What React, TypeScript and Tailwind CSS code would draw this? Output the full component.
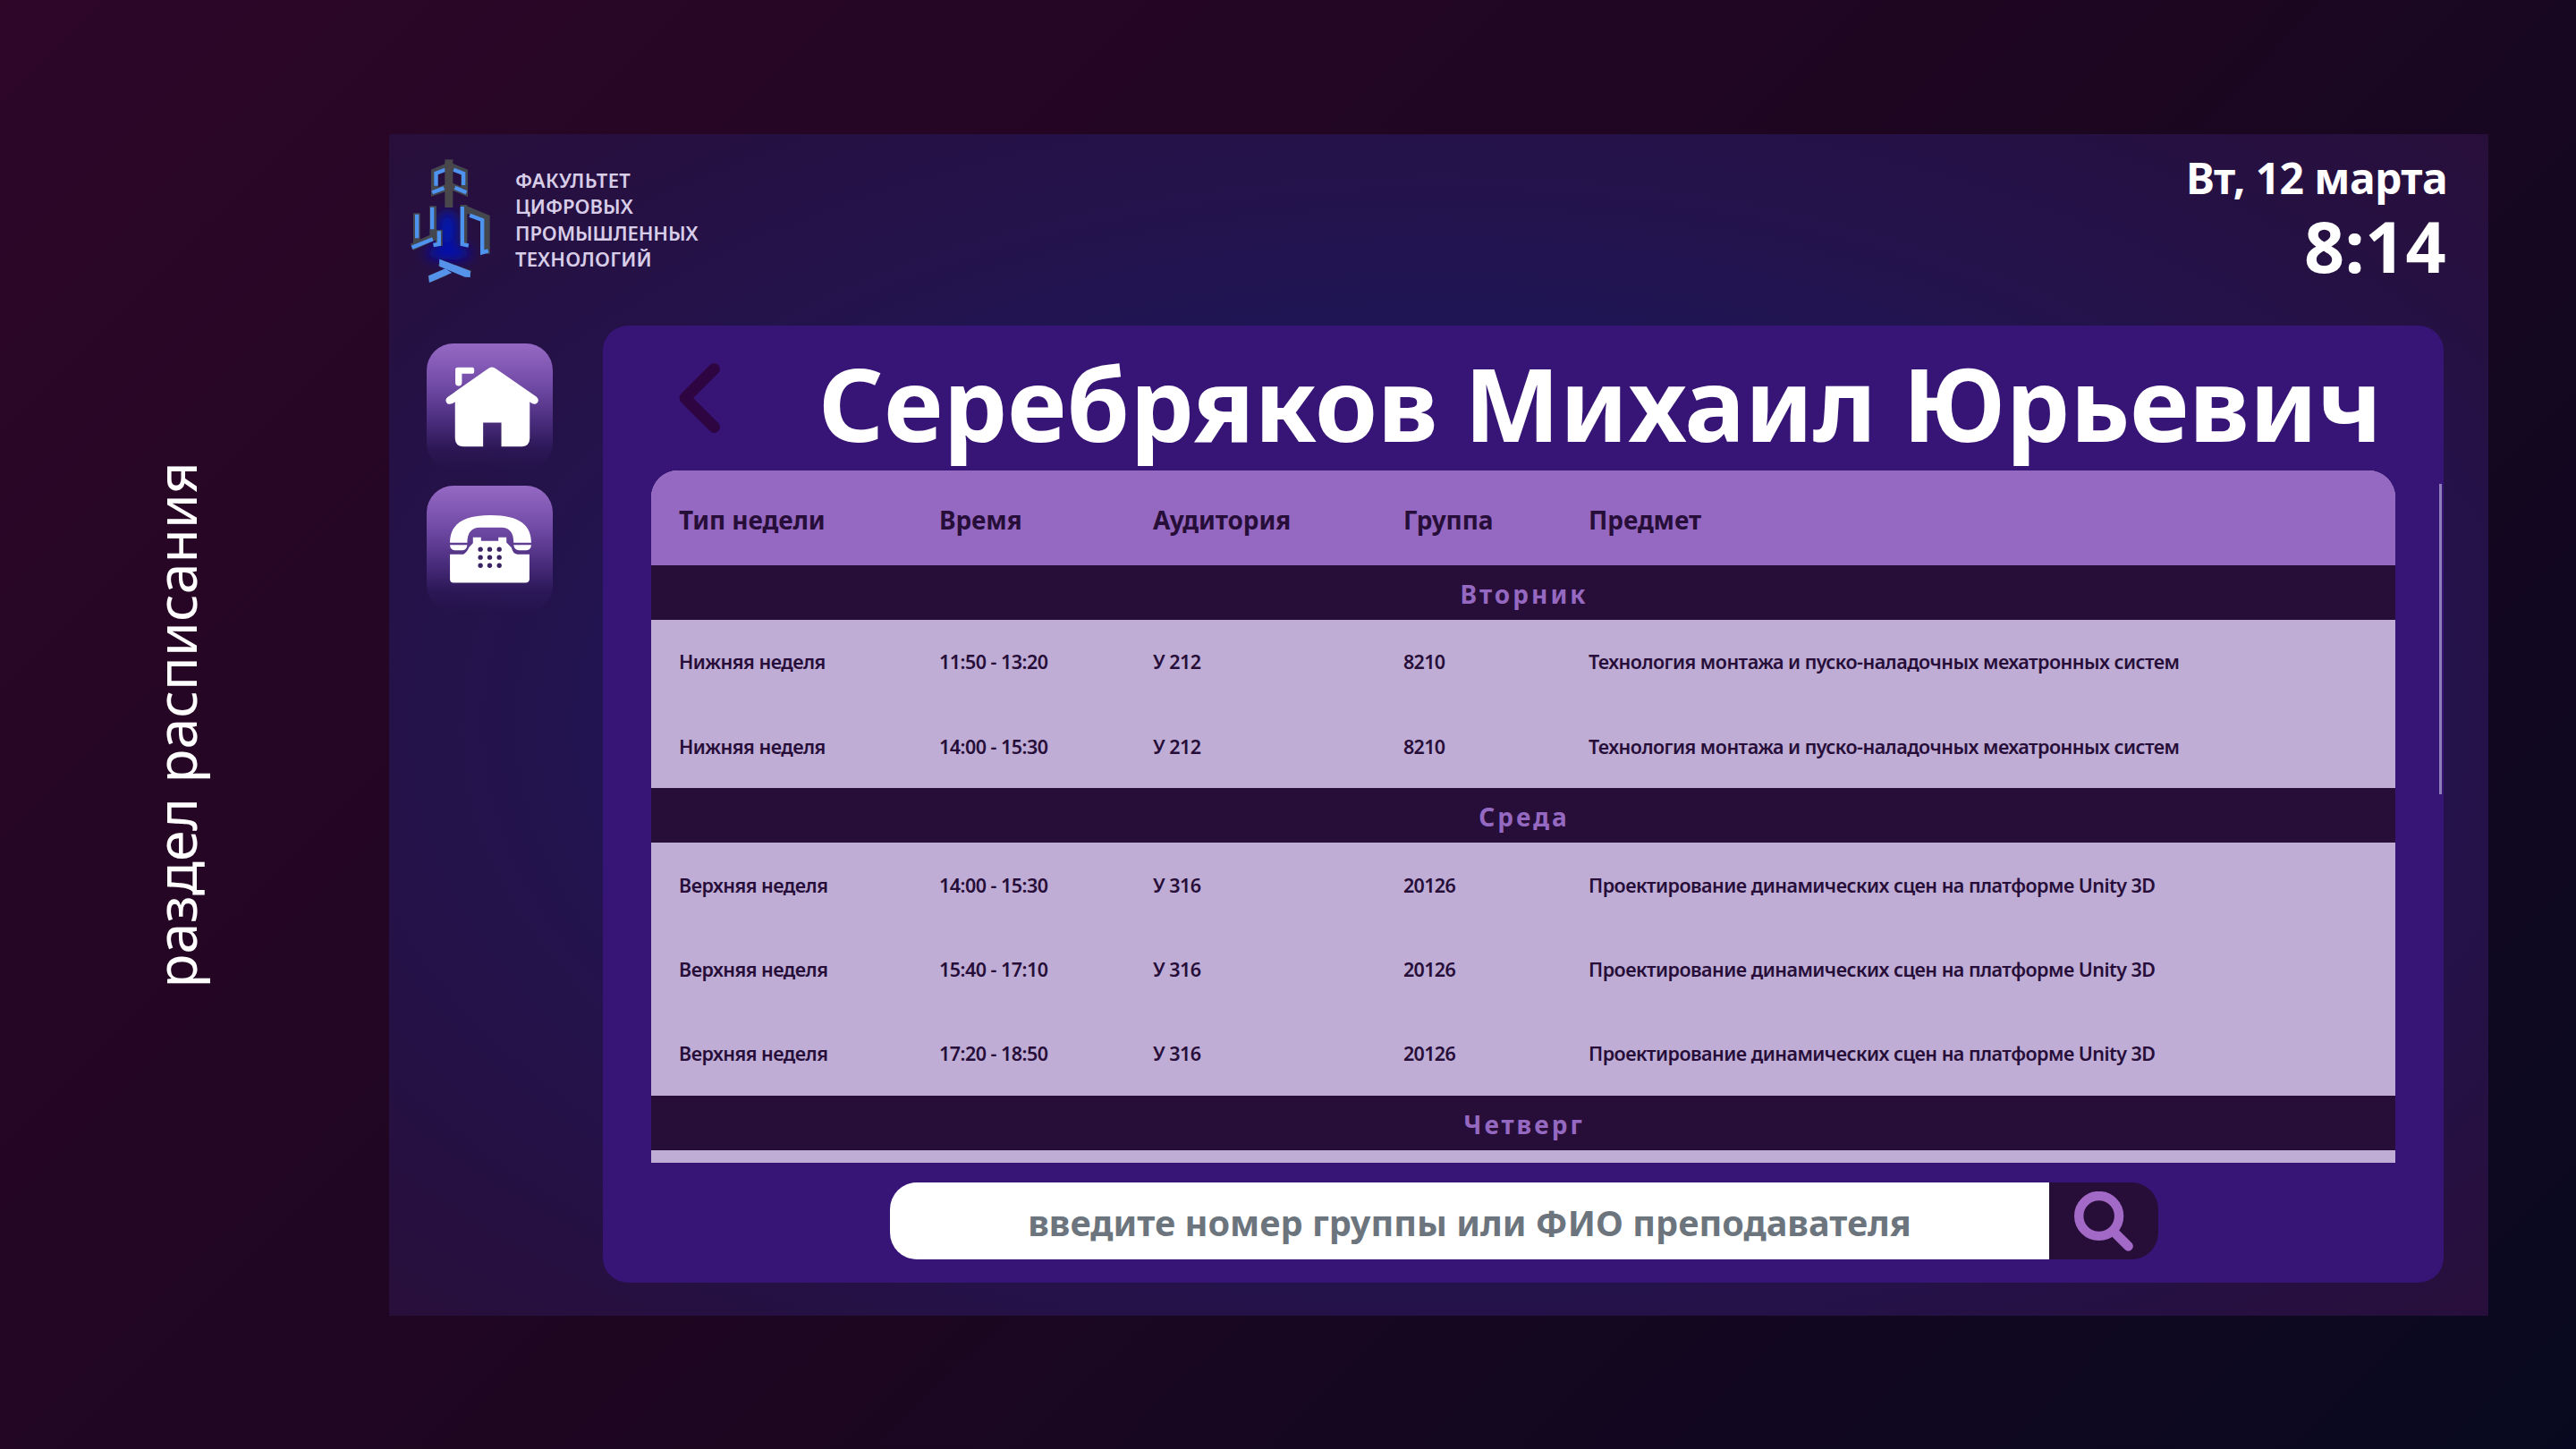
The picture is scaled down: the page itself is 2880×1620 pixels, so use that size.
import React from "react";

type Lesson = { week: string; time: string; room: string; group: string; subject: string };
type Day = { name: string; lessons: Lesson[] };

const mechatronics = "Технология монтажа и пуско-наладочных мехатронных систем";
const unity = "Проектирование динамических сцен на платформе Unity 3D";

const days: Day[] = [
  {
    name: "Вторник",
    lessons: [
      { week: "Нижняя неделя", time: "11:50 - 13:20", room: "У 212", group: "8210", subject: mechatronics },
      { week: "Нижняя неделя", time: "14:00 - 15:30", room: "У 212", group: "8210", subject: mechatronics },
    ],
  },
  {
    name: "Среда",
    lessons: [
      { week: "Верхняя неделя", time: "14:00 - 15:30", room: "У 316", group: "20126", subject: unity },
      { week: "Верхняя неделя", time: "15:40 - 17:10", room: "У 316", group: "20126", subject: unity },
      { week: "Верхняя неделя", time: "17:20 - 18:50", room: "У 316", group: "20126", subject: unity },
    ],
  },
  { name: "Четверг", lessons: [] },
];

const columns = "grid grid-cols-[291px_239px_280px_207px_1fr] items-center pl-[31px]";

function Logo() {
  return (
    <svg viewBox="85 78 272 420" className="h-[140px] w-[91px] shrink-0" fill="none">
      <defs>
        <filter id="glow" x="-60%" y="-60%" width="220%" height="220%">
          <feGaussianBlur stdDeviation="20" />
        </filter>
        <filter id="soft" x="-10%" y="-10%" width="120%" height="120%">
          <feGaussianBlur stdDeviation="2" />
        </filter>
      </defs>
      <g filter="url(#glow)">
        <ellipse cx="212" cy="315" rx="34" ry="62" fill="#0616b4" />
        <ellipse cx="215" cy="395" rx="76" ry="24" fill="#060eb8" />
      </g>
      <g filter="url(#soft)">
        <g stroke="#45474f" strokeWidth="23">
          <path d="M210 106 L168 124 V190 L210 176" />
          <path d="M224 106 L268 124 V190 L224 172" />
          <path d="M108 262 V372 M92 376 L178 336 M163 238 V345 M183 318 V372" />
          <path d="M266 234 V368 M266 246 L342 278 V398" />
          <path d="M184 428 L288 466 M150 484 L206 460" />
        </g>
        <g stroke="#4f93f0" strokeWidth="13">
          <path d="M204 116 L173 128 V170 M160 193 L200 178" />
          <path d="M232 116 L265 129 V168 M236 176 L275 193" />
          <path d="M109 266 V346 M92 377 L162 349 M160 242 V316 M183 322 V366 L164 369" />
          <path d="M261 240 V366 L282 371 M286 269 L328 285 V394 L348 388" />
        </g>
        <path d="M184 416 L288 456 V477 L270 476 L184 440 Z" fill="#5593ea" />
        <path d="M148 472 L204 448 L226 462 L150 495 Z" fill="#5593ea" />
        <path d="M216 82 V243" stroke="#48474c" strokeWidth="27" />
      </g>
    </svg>
  );
}

function HouseIcon() {
  return (
    <svg viewBox="82 73 422 422" className="size-full" fill="#fff">
      <path d="M184 153 H236 Q241 154 241 159 V169 Q241 174 236 174 H200 V204 a11 11 0 0 1 -22 0 V159 Q178 154 184 153 Z" />
      <path d="M286 158 Q300 147 315 158 L450 252 Q461 263 451 273 Q441 280 427 268 V390 Q426 416 402 418 H332 V338 H271 V418 H203 Q178 416 177 390 V268 Q163 280 151 274 Q141 263 151 253 Z" />
    </svg>
  );
}

function PhoneIcon() {
  return (
    <svg viewBox="82 550 422 422" className="size-full" fill="#fff">
      <path d="M160 741 C160 685 196 649 296 649 C396 649 432 685 432 741 H373 C373 710 362 690 332 690 H260 C230 690 218 710 218 741 Z" />
      <path d="M160 748 H218 Q216 766 200 766 H176 Q161 764 160 748 Z" />
      <path d="M373 748 H432 Q431 764 416 766 H391 Q375 764 373 748 Z" />
      <path d="M237 723 H264 V735 H322 V723 H349 V740 L366 757 Q370 777 386 780 H426 V863 Q425 875 413 875 H172 Q160 875 160 863 V780 H205 Q218 772 224 756 L237 742 Z" />
      <g fill="#3a2363">
        {[763, 790, 817].map((y) => [262, 293, 325].map((x) => <circle key={`${x}-${y}`} cx={x} cy={y} r="8" />))}
      </g>
    </svg>
  );
}

function NavButton({ label, children }: { label: string; children: React.ReactNode }) {
  return (
    <button
      aria-label={label}
      className="block size-[141px] rounded-[30px] bg-[linear-gradient(180deg,#9569c3_0%,#754eaa_30%,#492c7c_62%,rgba(52,28,98,0.5)_84%,rgba(38,17,74,0)_100%)]"
    >
      {children}
    </button>
  );
}

function Schedule() {
  return (
    <div className="mx-[54px] h-[774px] overflow-hidden rounded-t-[30px] bg-[#bfadd6] text-[#270e39]">
      <div className={`${columns} h-[106px] bg-[#9569c1] pt-[3px] text-[28px] font-bold tracking-[-0.1px]`}>
        <span>Тип недели</span>
        <span>Время</span>
        <span>Аудитория</span>
        <span>Группа</span>
        <span>Предмет</span>
      </div>
      {days.map((day) => (
        <section key={day.name}>
          <h2 className="flex h-[61px] items-center justify-center bg-[#270e39] pt-[3px] pl-[2px] text-[28px] font-bold tracking-[3px] text-[#9569c1]">
            {day.name}
          </h2>
          {day.lessons.map((l) => (
            <div key={l.time} className={`${columns} h-[94.2px] pt-px text-[21.5px] font-semibold tracking-[-0.52px]`}>
              <span>{l.week}</span>
              <span>{l.time}</span>
              <span>{l.room}</span>
              <span className="tracking-[-0.7px]">{l.group}</span>
              <span>{l.subject}</span>
            </div>
          ))}
        </section>
      ))}
    </div>
  );
}

function SearchBar() {
  return (
    <div className="mt-[22px] ml-[321px] flex h-[86px] w-[1418px] overflow-hidden rounded-[30px]">
      <input
        className="w-[1296px] bg-white pt-[5px] text-center text-[39.7px] font-bold outline-none placeholder:text-[#6c757d] placeholder:opacity-100"
        placeholder="введите номер группы или ФИО преподавателя"
      />
      <button aria-label="Найти" className="flex flex-1 items-center justify-center bg-[#270e39] pr-px">
        <svg viewBox="118 66 196 200" className="h-[67px] w-[66px]" fill="none" stroke="#a269c6">
          <circle cx="200" cy="148" r="67" strokeWidth="31" />
          <path d="M250 201 L298 249" strokeWidth="32" strokeLinecap="round" />
        </svg>
      </button>
    </div>
  );
}

export default function App() {
  return (
    <div className="flex h-[1620px] w-[2880px] overflow-hidden bg-[linear-gradient(135deg,#2d0628_0%,#1c0620_55%,#080920_100%)] font-['Noto_Sans',sans-serif] text-white">
      <aside className="flex w-[435px] shrink-0 items-center pl-[154px]">
        <p className="rotate-180 text-[62.6px] leading-[84px] whitespace-nowrap [writing-mode:vertical-rl]">
          раздел расписания
        </p>
      </aside>

      <div className="mt-[150px] flex h-[1321px] w-[2347px] flex-col bg-[radial-gradient(ellipse_at_center,#1d1a60_0%,#1f1656_46%,#24124a_68%,#280f3b_100%)]">
        <header className="flex h-[214px] shrink-0 justify-between pr-[46px] pl-[23px]">
          <div className="flex pt-[27px]">
            <Logo />
            <p className="mt-[10px] ml-[27px] text-[22px] leading-[29.3px] font-semibold text-[#d8cde8]">
              <span className="tracking-[0.4px]">ФАКУЛЬТЕТ</span>
              <br />
              ЦИФРОВЫХ
              <br />
              <span className="tracking-[-0.1px]">ПРОМЫШЛЕННЫХ</span>
              <br />
              <span className="tracking-[0.15px]">ТЕХНОЛОГИЙ</span>
            </p>
          </div>
          <div className="pt-[14px] text-right font-bold">
            <p className="text-[48px] leading-[70px] tracking-[-0.6px]">Вт, 12 марта</p>
            <p className="pr-px text-[79px] leading-[81px] tracking-[0.3px]">8:14</p>
          </div>
        </header>

        <div className="flex">
          <nav className="ml-[42px] flex w-[197px] shrink-0 flex-col gap-[18px] pt-[20px]">
            <NavButton label="Главная">
              <HouseIcon />
            </NavButton>
            <NavButton label="Контакты">
              <PhoneIcon />
            </NavButton>
          </nav>

          <main className="relative h-[1070px] w-[2058px] rounded-[28px] bg-[#361576]">
            <div className="flex h-[162px] items-center pl-[85px]">
              <svg viewBox="0 0 46 78" className="h-[78px] w-[46px]" fill="none">
                <path
                  d="M39.5 6.5 L7 39 L39.5 71.5"
                  stroke="#2e0540"
                  strokeWidth="13"
                  strokeLinecap="round"
                  strokeLinejoin="round"
                />
              </svg>
              <h1 className="ml-[110px] pt-[10px] text-[113.5px] leading-[150px] font-bold tracking-[-0.15px] whitespace-nowrap">
                Серебряков Михаил Юрьевич
              </h1>
            </div>
            <Schedule />
            <SearchBar />
            <div className="absolute top-[177px] right-[2px] h-[347px] w-[3px] bg-[#8f7fb8]" />
          </main>
        </div>
      </div>
    </div>
  );
}
